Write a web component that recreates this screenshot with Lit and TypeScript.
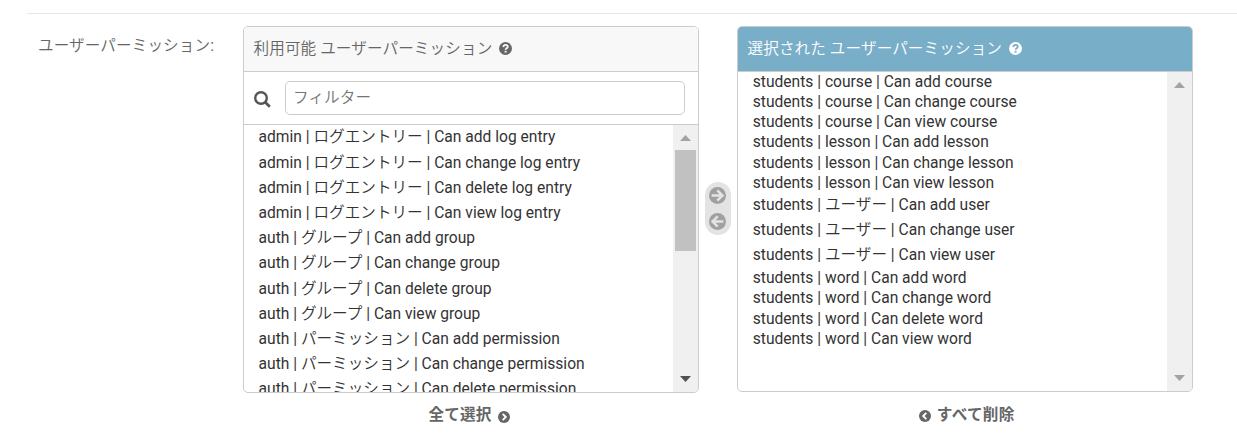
import { LitElement, html, css } from "lit";
import { customElement, property } from "lit/decorators.js";

const CJK = /([\u3000-\u30ff\u4e00-\u9fff]+)/;
const mixed = (s: string) =>
  s.split(CJK).filter((p) => p).map((p) => (CJK.test(p) ? html`<span class="cjk">${p}</span>` : p));

const available = [
  "admin | ログエントリー | Can add log entry",
  "admin | ログエントリー | Can change log entry",
  "admin | ログエントリー | Can delete log entry",
  "admin | ログエントリー | Can view log entry",
  "auth | グループ | Can add group",
  "auth | グループ | Can change group",
  "auth | グループ | Can delete group",
  "auth | グループ | Can view group",
  "auth | パーミッション | Can add permission",
  "auth | パーミッション | Can change permission",
  "auth | パーミッション | Can delete permission",
];

const chosen = [
  "students | course | Can add course",
  "students | course | Can change course",
  "students | course | Can view course",
  "students | lesson | Can add lesson",
  "students | lesson | Can change lesson",
  "students | lesson | Can view lesson",
  "students | ユーザー | Can add user",
  "students | ユーザー | Can change user",
  "students | ユーザー | Can view user",
  "students | word | Can add word",
  "students | word | Can change word",
  "students | word | Can delete word",
  "students | word | Can view word",
];

const help = html`<svg class="help" viewBox="0 0 16 16">
  <circle cx="8" cy="8" r="8" fill="currentColor" />
  <path class="mark" d="M5.3 6.2C5.5 4.4 6.6 3.6 8.1 3.6C9.7 3.6 10.8 4.5 10.8 5.8C10.8 7.6 8.1 7.6 8.1 9.6" />
  <rect class="dot" x="6.9" y="10.8" width="2.4" height="2.2" />
</svg>`;

const arrow = (left: boolean) => html`<svg class="arrow" viewBox="0 0 17 17">
  <circle cx="8.5" cy="8.5" r="8.5" fill="#a0a0a0" />
  <g transform=${left ? "matrix(-1 0 0 1 17 0)" : ""} fill="none" stroke="#e3e3e3" stroke-width="2.5">
    <path d="M2.6 8.5H13M8.3 3.3L13.5 8.5L8.3 13.7" />
  </g>
</svg>`;

const chevron = (left: boolean) => html`<svg class="chev" viewBox="0 0 12 12">
  <circle cx="6" cy="6" r="6" fill="#666" />
  <g transform=${left ? "matrix(-1 0 0 1 12 0)" : ""}>
    <path d="M4.7 2.9L7.8 6L4.7 9.1" fill="none" stroke="#fff" stroke-width="1.9" />
  </g>
</svg>`;

@customElement("option-list")
class OptionList extends LitElement {
  @property({ attribute: false }) items: string[] = [];
  @property({ type: Boolean }) scrollable = false;

  static styles = css`
    :host { display: flex; flex: 1; min-height: 0; overflow: hidden; }
    .rows { flex: 1; min-width: 0; overflow: hidden; padding-left: 14.8px; color: #333; }
    .rows.on { padding: 0.45px 0 0 14.6px; }
    .row { height: 20.15px; line-height: 20.15px; white-space: pre; }
    .row.tall { height: 25.16px; line-height: 25.16px; }
    .on .row.tall { height: 25.2px; line-height: 25.2px; }
    .cjk { font-family: "Noto Sans CJK JP", sans-serif; font-weight: 350; line-height: 1; }
    .bar { width: 25px; background: #f0f0f0; display: flex; flex-direction: column; align-items: center; }
    .up, .down { width: 11px; height: 6px; fill: #a3a3a3; flex: none; }
    .up { margin-top: 10px; }
    .down { margin-top: auto; margin-bottom: 10px; }
    .bar.on .down { fill: #505050; }
    .thumb { width: 21px; height: 101px; background: #c1c1c1; margin-top: 9px; }
  `;

  render() {
    return html`
      <div class="rows ${this.scrollable ? "on" : ""}">
        ${this.items.map((t) => html`<div class="row ${CJK.test(t) ? "tall" : ""}">${mixed(t)}</div>`)}
      </div>
      <div class="bar ${this.scrollable ? "on" : ""}">
        <svg class="up" viewBox="0 0 11 6"><path d="M0 6L5.5 0L11 6Z" /></svg>
        ${this.scrollable ? html`<div class="thumb"></div>` : ""}
        <svg class="down" viewBox="0 0 11 6"><path d="M0 0L5.5 6L11 0Z" /></svg>
      </div>
    `;
  }
}

@customElement("app-root")
class AppRoot extends LitElement {
  static styles = css`
    :host {
      display: block; height: 442px; overflow: hidden; background: #fff; color: #666;
      font: 15.6px Roboto, "Noto Sans CJK JP", sans-serif;
    }
    * { box-sizing: border-box; }
    .form { margin-left: 27px; margin-top: 13px; border-top: 1px solid #e8e8e8; padding: 12px 0 0 11px; display: flex; align-items: flex-start; }
    .label { width: 205px; padding-top: 8px; line-height: 24px; white-space: nowrap; }
    .cjk { font-family: "Noto Sans CJK JP", sans-serif; font-weight: 350; line-height: 1; letter-spacing: 0.1px; }
    .panel { width: 456px; height: 367px; border: 1px solid #ccc; border-radius: 5px; overflow: hidden; display: flex; flex-direction: column; }
    .panel.right { height: 366px; }
    .title { height: 45px; flex: none; display: flex; align-items: center; gap: 6.5px; padding-left: 9.5px; background: #f8f8f8; border-bottom: 1px solid #ccc; white-space: pre; padding-bottom: 1px; }
    .right .title { background: #79aec8; color: #fff; }
    .help { width: 13px; height: 13px; flex: none; margin-bottom: 1px; }
    .mark { fill: none; stroke: #f8f8f8; stroke-width: 2.2; }
    .dot { fill: #f8f8f8; }
    .right .mark { stroke: #79aec8; }
    .right .dot { fill: #79aec8; }
    .filter { height: 53px; flex: none; border-bottom: 1px solid #ccc; display: flex; align-items: center; padding: 0 13px 0 10px; gap: 14px; }
    .search { width: 17px; height: 17px; flex: none; margin-top: 3px; }
    .input { flex: 1; height: 34px; border: 1px solid #ccc; border-radius: 5px; padding-left: 7px; line-height: 33px; color: #757575; }
    .mid { width: 38px; display: flex; justify-content: center; padding-top: 156px; }
    .chooser { width: 26px; height: 53px; border-radius: 13px; background: #e3e3e3; display: flex; flex-direction: column; align-items: center; gap: 9px; padding: 5px 1px 0 0; }
    .arrow { width: 17px; height: 17px; display: block; }
    .foot { display: flex; justify-content: center; align-items: center; gap: 7px; height: 24px; margin-top: 9px; padding-right: 3px; font-weight: 700; line-height: 24px; }
    .foot .cjk { font-weight: 700; }
    .foot.b { margin-top: 10px; gap: 5.5px; padding: 0 0 0 4px; }
    .foot.b .cjk { letter-spacing: 0.3px; }
    .chev { width: 12px; height: 12px; margin-top: 5px; }
    .foot.b .chev { margin-top: 4px; }
  `;

  render() {
    return html`
      <div class="form">
        <div class="label">${mixed("ユーザーパーミッション:")}</div>
        <div>
          <div class="panel">
            <div class="title"><span>${mixed("利用可能 ユーザーパーミッション")}</span>${help}</div>
            <div class="filter">
              <svg class="search" viewBox="0 0 17 17" fill="none" stroke="#555">
                <circle cx="7" cy="7" r="5.8" stroke-width="2.4" />
                <path d="M11 11L15.8 15.8" stroke-width="2.8" />
              </svg>
              <div class="input">${mixed("フィルター")}</div>
            </div>
            <option-list .items=${available} scrollable></option-list>
          </div>
          <div class="foot">${mixed("全て選択")}${chevron(false)}</div>
        </div>
        <div class="mid"><div class="chooser">${arrow(false)}${arrow(true)}</div></div>
        <div>
          <div class="panel right">
            <div class="title"><span>${mixed("選択された ユーザーパーミッション")}</span>${help}</div>
            <option-list .items=${chosen}></option-list>
          </div>
          <div class="foot b">${chevron(true)}${mixed("すべて削除")}</div>
        </div>
      </div>
    `;
  }
}
